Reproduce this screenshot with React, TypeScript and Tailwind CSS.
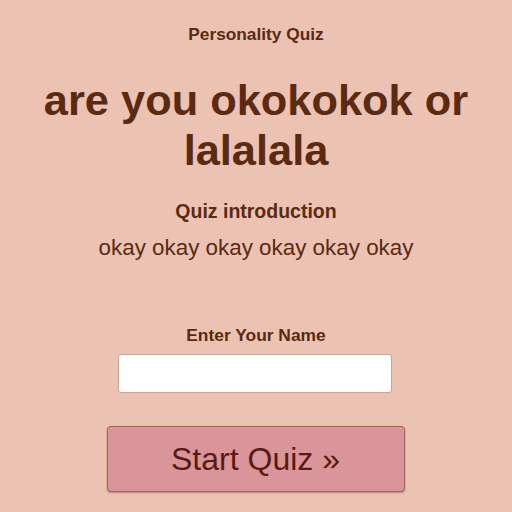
export default function App() {
  return (
    <div
      className="w-[512px] h-[512px] bg-[#ecc3b3] text-[#5a2a12] flex flex-col items-center overflow-hidden"
      style={{ fontFamily: '"Liberation Sans", Arial, sans-serif' }}
    >
      <div className="mt-[24px] text-[17.3px] font-bold leading-[20px]">Personality Quiz</div>
      <h1 className="mt-[31px] w-[500px] text-center text-[43.4px] font-bold leading-[50px]">
        are you okokokok or lalalala
      </h1>
      <div className="mt-[25px] text-[19.5px] font-bold leading-[22px]">Quiz introduction</div>
      <div className="mt-[13px] text-[22.4px] leading-[26px]">okay okay okay okay okay okay</div>
      <div className="mt-[64px] text-[17.4px] font-bold leading-[20px]">Enter Your Name</div>
      <input
        type="text"
        className="mt-[9px] ml-[-3px] w-[274px] h-[39px] bg-white rounded-[3px] border border-[#c9a49a] outline-none"
      />
      <button className="mt-[33px] ml-[-1px] w-[298px] h-[66px] bg-[#d9959a] border border-[#9a6660] rounded-[4px] text-[32px] text-[#5a1a12] shadow-[0_1px_2px_rgba(60,20,10,0.35)]">
        Start Quiz »
      </button>
    </div>
  );
}
